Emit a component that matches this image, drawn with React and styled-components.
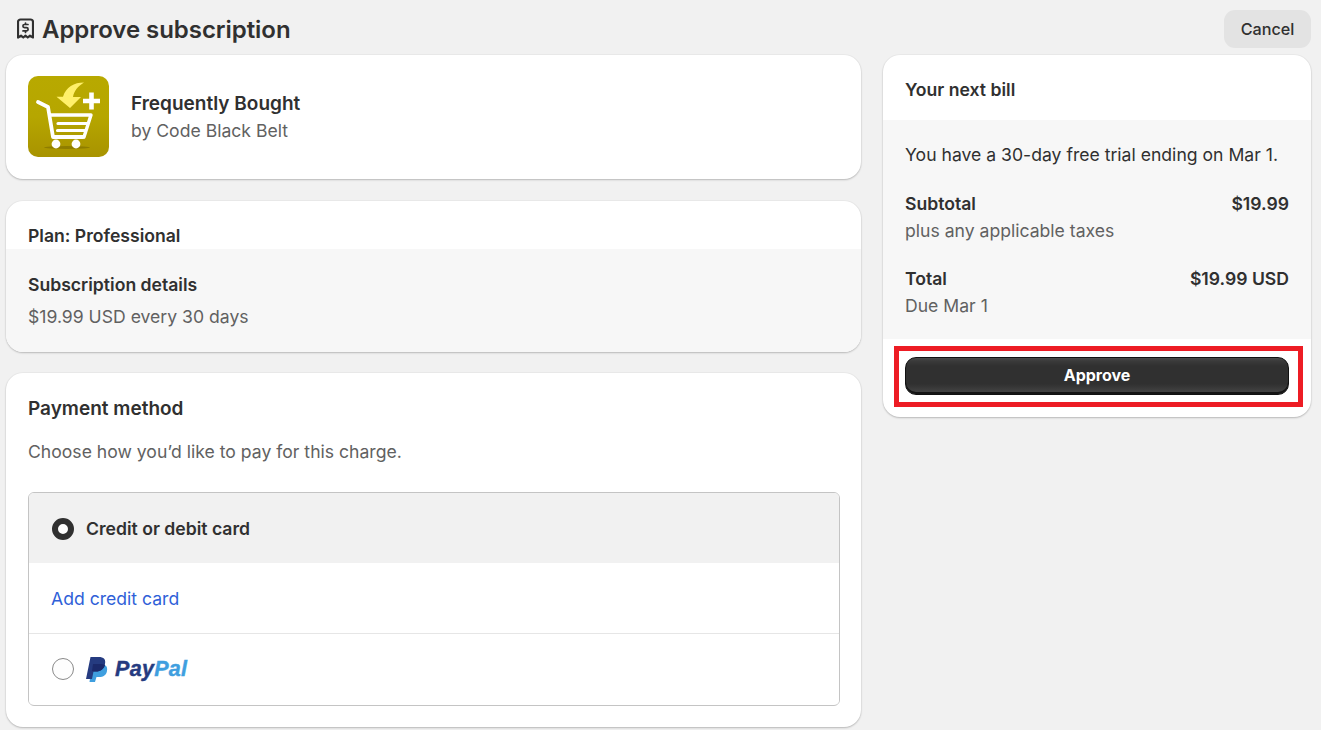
import React from "react";
import styled, { createGlobalStyle } from "styled-components";

const Global = createGlobalStyle`
  html, body { margin: 0; padding: 0; background: #f1f1f1; }
  body { font-family: Inter, "Liberation Sans", sans-serif; color: #303030; overflow: hidden; }
  * { box-sizing: border-box; }
`;
const Page = styled.div`
  width: 1321px; height: 730px; overflow: hidden;
  padding: 10px 10px 0 6px;
`;
const Header = styled.header`
  display: flex; align-items: center; justify-content: space-between;
  height: 38px; margin-bottom: 7px; padding-left: 11px;
`;
const TitleWrap = styled.div`display: flex; align-items: center; gap: 8px;`;
const Title = styled.h1`
  margin: 0; padding-top: 2px; font-size: 24px; line-height: 38px; font-weight: 600; color: #303030;
  letter-spacing: -0.05px;
`;
const CancelButton = styled.button`
  width: 87px; height: 38px; border: 0; border-radius: 11px; background: #e3e3e3;
  font: 500 16.2px Inter, sans-serif; color: #303030; padding: 0;
`;
const Columns = styled.div`
  display: grid; grid-template-columns: 855px 428px; column-gap: 22px; align-items: start;
`;
const Stack = styled.div`display: flex; flex-direction: column; gap: 21px;`;
const Card = styled.section`
  position: relative; background: #fff; border-radius: 17px; overflow: hidden;
  box-shadow: 0 1px 2px rgba(0,0,0,.22), 0 0 0 1px rgba(0,0,0,.025);
`;
const AppCard = styled(Card)`margin-bottom: 1px;`;
const AppRow = styled.div`
  display: flex; align-items: center; gap: 22px; height: 124px; padding: 0 22px;
`;
const AppText = styled.div`display: flex; flex-direction: column; gap: 3px;`;
const Strong = styled.div`
  font-size: 17.6px; line-height: 24px; font-weight: 560; color: #303030;
  white-space: nowrap;
`;
const Heading = styled(Strong)`font-size: 19px;`;
const Muted = styled.div`
  font-size: 17.6px; line-height: 24px; font-weight: 400; color: #616161; white-space: nowrap;
`;
const PlanHead = styled.div`height: 48px; padding: 23px 22px 0; overflow: hidden;`;
const GrayBody = styled.div`
  background: #f7f7f7; height: 103px; padding: 24px 22px 0;
  display: flex; flex-direction: column; gap: 8px;
`;
const PaymentCard = styled(Card)`height: 354px; padding: 24px 21px 0 22px;`;
const PaymentIntro = styled(Muted)`margin: 19px 0 28px;`;
const Choices = styled.div`
  border: 1px solid #c4c4c4; border-radius: 6px; overflow: hidden; height: 214px;
`;
const ChoiceRow = styled.div`
  display: flex; align-items: center; gap: 12px; height: 70px; padding: ${(p) => (p.$selected ? "2px" : "0")} 22px 0 23px;
  background: ${(p) => (p.$selected ? "#f1f1f1" : "#fff")};
`;
const Radio = styled.span`
  width: 22px; height: 22px; border-radius: 50%; flex: none; background: #fdfdfd;
  border: ${(p) => (p.$on ? "6px solid #303030" : "1px solid #8a8a8a")};
`;
const LinkRow = styled.div`
  height: 71px; display: flex; align-items: center; padding: 2px 22px 0;
  border-bottom: 1px solid #e6e6e6;
`;
const CardLink = styled.a`font-size: 17.6px; color: #2f5fd8; line-height: 24px;`;
const PayPalMark = styled.div`display: flex; align-items: center; gap: 7px;`;
const PayPalWord = styled.span`
  font: italic 700 21.500px/24px "Liberation Sans", sans-serif; letter-spacing: 0.3px; color: #253b80;
  -webkit-text-stroke: 0.4px currentColor;
`;
const PayPalLight = styled.span`color: #3f9fdf;`;
const BillHead = styled.div`height: 65px; padding: 23px 22px 0;`;
const BillBody = styled.div`
  background: #f7f7f7; height: 219px; padding: 23px 22px 0;
`;
const TrialText = styled.div`
  font-size: 17.6px; line-height: 24px; color: #303030; margin-bottom: 25px; white-space: nowrap;
`;
const BillRow = styled.div`display: flex; justify-content: space-between; margin-bottom: 3px;`;
const BillGroup = styled.div`margin-bottom: 24px;`;
const BillFoot = styled.div`height: 78px; padding: 18px 22px 0;`;
const ApproveButton = styled.button`
  display: block; width: 100%; height: 38px; border-radius: 11px; padding: 0 0 2px;
  border: 1px solid #111; color: #fff;
  background: linear-gradient(#4a4a4a 0, #3a3a3a 3px, #303030 8px, #303030 26px, #474747 100%);
  box-shadow: inset 0 -2px 0 #141414;
  font: 700 16px Inter, sans-serif;
`;
const Highlight = styled.div`
  position: absolute; left: 11px; top: 291px; width: 409px; height: 61px;
  border: 5px solid #ed1c24; pointer-events: none;
`;
const LogoSvg = styled.svg`display: block; flex: none; margin-top: -1px;`;

const ReceiptIcon = () => (
  <svg width="17" height="22" viewBox="1.500 0 17 22" fill="none" stroke="#303030" strokeWidth="2.2" strokeLinejoin="round" strokeLinecap="round">
    <path d="M2.5 19.5V4a2.5 2.5 0 0 1 2.5-2.500h10A2.500 2.500 0 0 1 17.500 4v15.500l-3-1.800-2.250 1.800L10 17.700l-2.250 1.800L5.500 17.700z" />
    <path strokeWidth="1.700" d="M12.500 6.500H9a1.500 1.500 0 0 0 0 3.200h2a1.500 1.500 0 0 1 0 3.200H7.500M10 5v1.500M10 13v1.500" />
  </svg>
);

const AppLogo = () => (
  <LogoSvg width="81" height="81" viewBox="0 0 81 81">
    <defs>
      <linearGradient id="bg" x1="0" y1="0" x2="0" y2="1">
        <stop offset="0" stopColor="#b8a900" />
        <stop offset=".5" stopColor="#b6a600" />
        <stop offset="1" stopColor="#a89300" />
      </linearGradient>
    </defs>
    <rect width="81" height="81" rx="10" fill="url(#bg)" />
    <ellipse cx="39" cy="71.500" rx="23" ry="1.500" fill="#8f7d00" />
    <path d="M56 6.500C46 6.500 38 11 35 20.700H28.500L42 32 53 21H45C46 15 50 10 56 6.500Z" fill="#fff06a" />
    <path d="M61.200 16.500h4.600v6.200H72v4.600h-6.200v6.200h-4.600v-6.200H55v-4.600h6.200z" fill="#fff" />
    <g fill="none" stroke="#fff" strokeLinecap="round" strokeLinejoin="round">
      <path d="M10 26l10 5 5 30H55" strokeWidth="3.800" />
      <path d="M22 39H63L56 61" strokeWidth="3.400" />
      <path d="M30 47.500H59M29.500 54.500H57" strokeWidth="3.200" />
    </g>
    <circle cx="28" cy="68" r="4.400" fill="#fff" />
    <circle cx="48" cy="68" r="4.400" fill="#fff" />
  </LogoSvg>
);

const PayPalP = () => (
  <svg width="22" height="25" viewBox="0 0 22 25">
    <path d="M6 7h8c5 0 8 2 7 7-.8 4-3.500 6-8 6h-2.500L9 25H3.500z" fill="#3f9fdf" />
    <path d="M4.500 0h8C18 0 20 2.500 19 7c-1 5-4.500 7.500-9 7.500H7.500L6 22H0z" fill="#253b80" />
    <path d="M7 7h7c1.500 0 3.500.4 5 1-1 4-4.500 6.500-9 6.500H7.500L6 14z" fill="#1b2a6b" />
  </svg>
);

export default function App() {
  return (
    <Page>
      <Global />
      <Header>
        <TitleWrap>
          <ReceiptIcon />
          <Title>Approve subscription</Title>
        </TitleWrap>
        <CancelButton>Cancel</CancelButton>
      </Header>
      <Columns>
        <Stack>
          <AppCard>
            <AppRow>
              <AppLogo />
              <AppText>
                <Heading>Frequently Bought</Heading>
                <Muted>by Code Black Belt</Muted>
              </AppText>
            </AppRow>
          </AppCard>
          <Card>
            <PlanHead><Strong>Plan: Professional</Strong></PlanHead>
            <GrayBody>
              <Strong>Subscription details</Strong>
              <Muted>$19.99 USD every 30 days</Muted>
            </GrayBody>
          </Card>
          <PaymentCard>
            <Heading>Payment method</Heading>
            <PaymentIntro>Choose how you’d like to pay for this charge.</PaymentIntro>
            <Choices>
              <ChoiceRow $selected>
                <Radio $on />
                <Strong>Credit or debit card</Strong>
              </ChoiceRow>
              <LinkRow><CardLink>Add credit card</CardLink></LinkRow>
              <ChoiceRow>
                <Radio />
                <PayPalMark>
                  <PayPalP />
                  <PayPalWord>Pay<PayPalLight>Pal</PayPalLight></PayPalWord>
                </PayPalMark>
              </ChoiceRow>
            </Choices>
          </PaymentCard>
        </Stack>
        <Card>
          <BillHead><Strong>Your next bill</Strong></BillHead>
          <BillBody>
            <TrialText>You have a 30-day free trial ending on Mar 1.</TrialText>
            <BillGroup>
              <BillRow><Strong>Subtotal</Strong><Strong>$19.99</Strong></BillRow>
              <Muted>plus any applicable taxes</Muted>
            </BillGroup>
            <BillGroup>
              <BillRow><Strong>Total</Strong><Strong>$19.99 USD</Strong></BillRow>
              <Muted>Due Mar 1</Muted>
            </BillGroup>
          </BillBody>
          <BillFoot><ApproveButton>Approve</ApproveButton></BillFoot>
          <Highlight />
        </Card>
      </Columns>
    </Page>
  );
}
